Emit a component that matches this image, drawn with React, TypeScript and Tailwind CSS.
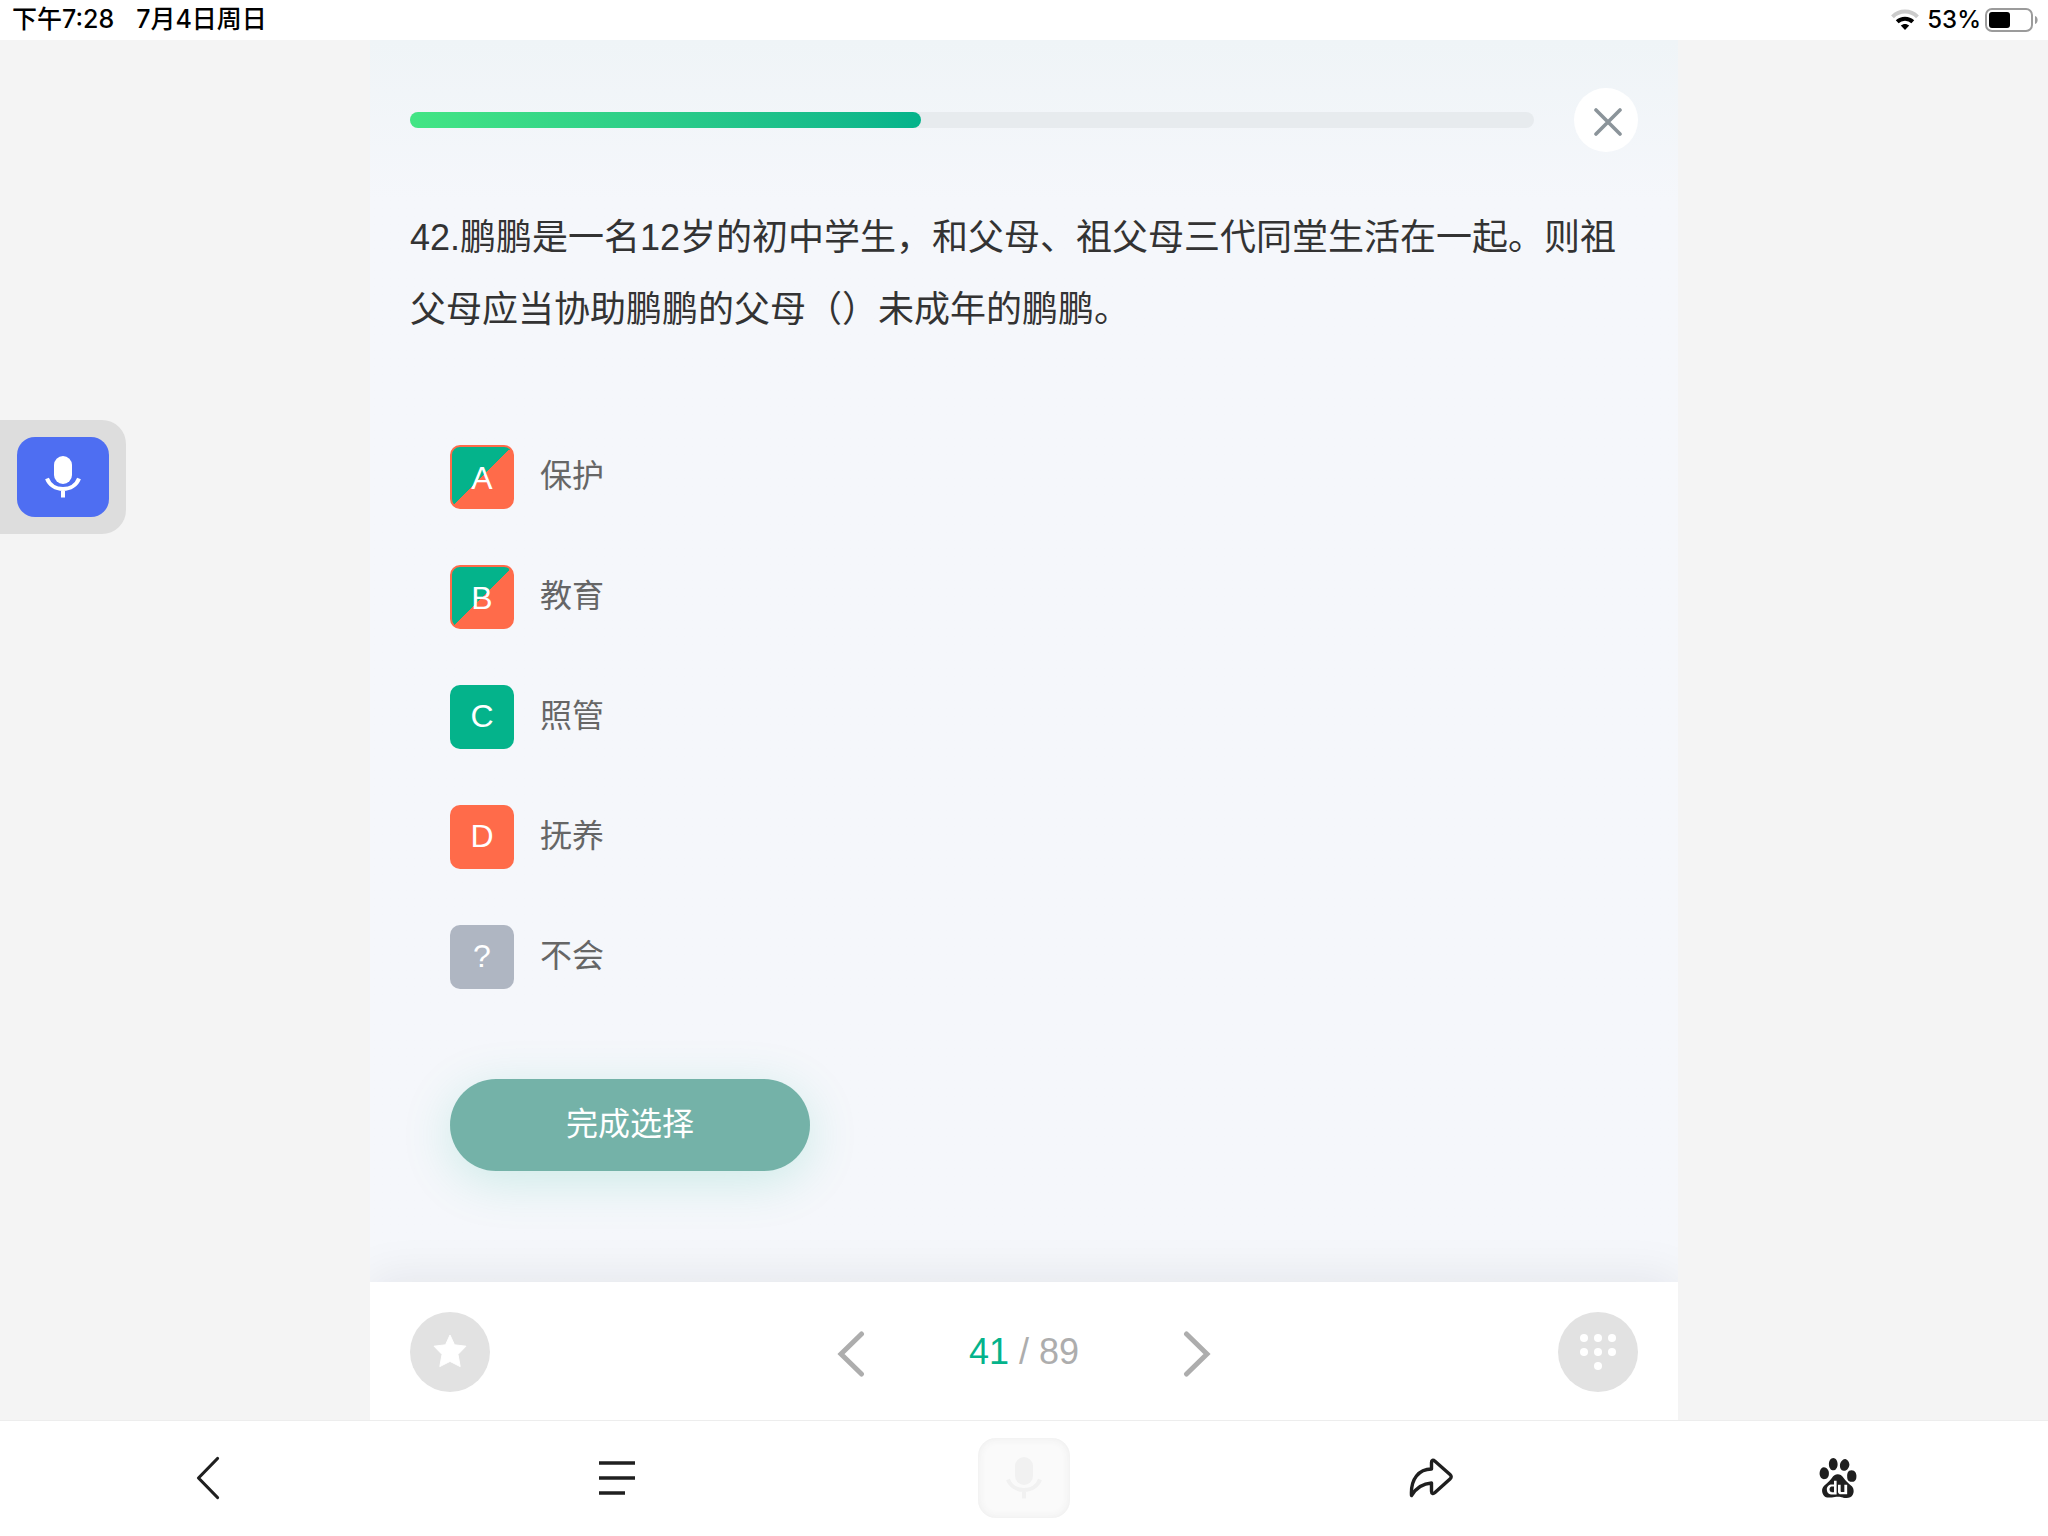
import { SiBaidu } from 'react-icons/si'

const options = [
  { key: 'A', label: '保护', badge: 'border-2 border-[#ff6b4a] bg-linear-135 from-[#04b38b] from-50% to-[#ff6b4a] to-50% pt-0.5' },
  { key: 'B', label: '教育', badge: 'border-2 border-[#ff6b4a] bg-linear-135 from-[#04b38b] from-50% to-[#ff6b4a] to-50% pt-0.5' },
  { key: 'C', label: '照管', badge: 'bg-[#04b38b] pb-0.5' },
  { key: 'D', label: '抚养', badge: 'bg-[#ff6b4a] pb-0.5' },
  { key: '?', label: '不会', badge: 'bg-[#afb6c2] pb-0.5' },
]

function MicIcon({ className }: { className: string }) {
  return (
    <svg className={className} width="36" height="44" viewBox="0 0 36 44" fill="none">
      <rect x="9" y="1" width="18" height="28" rx="9" fill="currentColor" />
      <path d="M2 23.5C4.5 30 10.500 34 18 34s13.500-4 16-10.500M18 34v8.500" stroke="currentColor" strokeWidth="4" />
    </svg>
  )
}

function StatusBar() {
  return (
    <header className="flex h-10 items-center justify-between bg-white pl-3 pr-[9px] font-[Inter,'Noto_Sans_CJK_SC',sans-serif] text-2xl font-medium text-black">
      <div className="flex gap-[22px] text-[25px]">
        <span>下午7:28</span>
        <span>7月4日周日</span>
      </div>
      <div className="flex items-center gap-2">
        <svg width="28" height="22" viewBox="0 0 28 22" fill="none">
          <path d="M1.500 7.800C8.500 0.800 19.500 0.800 26.500 7.800" stroke="#cbcbcb" strokeWidth="4" />
          <path d="M6.200 12.800C10.500 8.600 17.500 8.600 21.800 12.800" stroke="#000" strokeWidth="4" />
          <path d="M14 21l-4.200-4.400c2.400-2.100 6-2.100 8.400 0z" fill="#000" />
        </svg>
        <div className="flex items-center gap-1">
          <span>53%</span>
          <svg width="54" height="24" viewBox="0 0 54 24" fill="none">
            <rect x="1" y="1" width="46" height="22" rx="6" stroke="#9b9b9b" strokeWidth="2" />
            <rect x="4" y="4" width="21" height="16" rx="3" fill="#000" />
            <path d="M50 8c3.500 1 3.500 7 0 8z" fill="#9b9b9b" />
          </svg>
        </div>
      </div>
    </header>
  )
}

function Pager() {
  return (
    <footer className="flex items-center justify-between bg-white px-10 pt-[30px] pb-7 shadow-[0_-4px_44px_rgba(20,20,40,0.08)]">
      <button aria-label="收藏" className="flex size-20 items-center justify-center rounded-full bg-[#e2e2e2]">
        <svg width="34" height="36" viewBox="0 0 34 36">
          <path
            d="M17 1l4.500 9.800L33 12.200l-8 8.200 2.200 12.200L17 27.400 6.800 32.600 9 20.400 1 12.200l11.500-1.400z"
            fill="#fff"
            stroke="#fff"
            strokeWidth="1"
            strokeLinejoin="round"
          />
        </svg>
      </button>
      <div className="flex items-center gap-[104px]">
        <button aria-label="上一题" className="pt-1">
          <svg width="28" height="46" viewBox="0 0 28 46" fill="none" stroke="#adadad" strokeWidth="5" strokeLinecap="round">
            <path d="M24.500 3L4 23l20.500 20" />
          </svg>
        </button>
        <p className="text-4xl text-[#adadad]">
          <span className="text-[#04b38b]">41</span> / 89
        </p>
        <button aria-label="下一题" className="pt-1">
          <svg width="28" height="46" viewBox="0 0 28 46" fill="none" stroke="#adadad" strokeWidth="5" strokeLinecap="round">
            <path d="M3.500 3L24 23 3.500 43" />
          </svg>
        </button>
      </div>
      <button aria-label="答题卡" className="flex size-20 items-center justify-center rounded-full bg-[#e2e2e2]">
        <svg width="36" height="36" viewBox="0 0 36 36" fill="#fff">
          <circle cx="4" cy="4" r="4" />
          <circle cx="18" cy="4" r="4" />
          <circle cx="32" cy="4" r="4" />
          <circle cx="4" cy="18" r="4" />
          <circle cx="18" cy="18" r="4" />
          <circle cx="32" cy="18" r="4" />
          <circle cx="18" cy="32" r="4" />
        </svg>
      </button>
    </footer>
  )
}

function BrowserBar() {
  return (
    <nav className="grid h-[116px] grid-cols-5 place-items-center border-t border-[#ededed] bg-white px-1.5 pb-0.5 text-[#1f1f1f]">
      <button aria-label="后退">
        <svg width="28" height="44" viewBox="0 0 28 44" fill="none" stroke="currentColor" strokeWidth="3.200" strokeLinecap="round" strokeLinejoin="round">
          <path d="M21.500 2.500L2.500 22l19 19.500" />
        </svg>
      </button>
      <button aria-label="菜单">
        <svg width="36" height="34" viewBox="0 0 36 34" fill="none" stroke="currentColor" strokeWidth="3.400">
          <path d="M0 2h36M0 17h36M0 32h26" />
        </svg>
      </button>
      <button aria-label="语音" className="flex h-20 w-[92px] items-center justify-center rounded-[18px] bg-[#fafafa] shadow-[inset_0_0_8px_#ebebeb]">
        <MicIcon className="text-[#f1f1f1]" />
      </button>
      <button aria-label="分享">
        <svg width="44" height="40" viewBox="0 0 44 40" fill="none" stroke="currentColor" strokeWidth="3.400" strokeLinejoin="round">
          <path d="M2.500 37.500C1.500 21 10 11 22.500 11V4.500c0-2.500 1.500-3 3.500-1.300L41 16.500c1.600 1.500 1.600 3 0 4.500L26 34.500c-2 1.700-3.500 1-3.500-1.300V25C14 25.500 7.500 29.500 2.500 37.500z" />
        </svg>
      </button>
      <button aria-label="百度首页">
        <SiBaidu size={40} />
      </button>
    </nav>
  )
}

export default function App() {
  return (
    <div className="flex min-h-screen flex-col bg-[#f4f4f4] font-['Liberation_Sans','Noto_Sans_CJK_SC',sans-serif]">
      <StatusBar />

      <main className="mx-auto flex w-full max-w-[1308px] flex-1 flex-col overflow-hidden bg-[#f5f7fb]">
        <section className="flex-1 bg-linear-to-b from-[#eff4f7] to-[#f5f7fb] to-[160px] px-10 pt-12">
          {/* Progress */}
          <div className="flex items-center gap-10">
            <div className="h-4 flex-1 rounded-full bg-[#e7ebee]">
              <div className="h-4 rounded-full bg-linear-to-r from-[#43e584] to-[#04b38b]" style={{ width: `${(511 / 1124) * 100}%` }} />
            </div>
            <button aria-label="关闭" className="flex size-16 items-center justify-center rounded-full bg-white pt-1 pl-1">
              <svg width="28" height="28" viewBox="0 0 28 28" stroke="#8b949a" strokeWidth="3.600" strokeLinecap="round">
                <path d="M2 2l24 24M26 2L2 26" />
              </svg>
            </button>
          </div>

          <h1 className="mt-[50px] text-4xl leading-[72px] text-[#333]">
            42.鹏鹏是一名12岁的初中学生，和父母、祖父母三代同堂生活在一起。则祖父母应当协助鹏鹏的父母（）未成年的鹏鹏。
          </h1>

          {/* Answers */}
          <ul className="mt-[99px] space-y-14 px-10">
            {options.map((option) => (
              <li key={option.key}>
                <button className="flex h-16 items-center gap-[26px] text-[32px] text-[#666]">
                  <span className={`flex size-16 items-center justify-center rounded-[10px] text-white ${option.badge}`}>{option.key}</span>
                  <span className="pb-0.5">{option.label}</span>
                </button>
              </li>
            ))}
          </ul>

          <button className="mt-[90px] mb-12 ml-10 h-[92px] w-[360px] rounded-full bg-[#74b2a8] pb-0.5 text-[32px] text-white shadow-[0_10px_50px_rgba(4,179,139,0.17)]">
            完成选择
          </button>
        </section>
        <Pager />
      </main>

      <BrowserBar />

      {/* Floating voice handle */}
      <div className="absolute top-[420px] left-0 rounded-r-3xl bg-[#ddd] p-[17px]">
        <button aria-label="语音搜索" className="flex h-20 w-[92px] items-center justify-center rounded-[18px] bg-[#4e6ef2]">
          <MicIcon className="text-white" />
        </button>
      </div>
    </div>
  )
}
